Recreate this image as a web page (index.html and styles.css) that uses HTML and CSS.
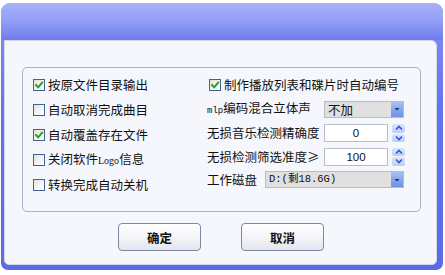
FILE: index.html
```html
<!DOCTYPE html>
<html>
<head>
<meta charset="utf-8">
<link rel="stylesheet" href="styles.css">
</head>
<body>
<div class="window">
  <div class="titlebar"></div>
  <div class="client">
    <div class="group">
      <div class="col col-left">
        <div class="row"><span class="cb checked"><svg viewBox="0 0 10 10"><path d="M2 5 L4.2 7.4 L8.2 2.6"/></svg></span><span class="txt">按原文件目录输出</span></div>
        <div class="row"><span class="cb"></span><span class="txt">自动取消完成曲目</span></div>
        <div class="row"><span class="cb checked"><svg viewBox="0 0 10 10"><path d="M2 5 L4.2 7.4 L8.2 2.6"/></svg></span><span class="txt">自动覆盖存在文件</span></div>
        <div class="row"><span class="cb"></span><span class="txt">关闭软件<span class="latin">Logo</span>信息</span></div>
        <div class="row"><span class="cb"></span><span class="txt">转换完成自动关机</span></div>
      </div>
      <div class="col col-right">
        <div class="row r1"><span class="cb checked"><svg viewBox="0 0 10 10"><path d="M2 5 L4.2 7.4 L8.2 2.6"/></svg></span><span class="txt">制作播放列表和碟片时自动编号</span></div>
        <div class="row r2">
          <span class="lbl"><span class="mono">mlp</span>编码混合立体声</span>
          <div class="select sel-small"><span class="val">不加</span><span class="dd"><svg viewBox="0 0 8 8"><path d="M1.5 3 L6.5 3 L4 5.5 Z"/></svg></span></div>
        </div>
        <div class="row r3">
          <span class="lbl">无损音乐检测精确度</span>
          <div class="spin"><span class="num">0</span></div>
          <div class="spinbtn"><span class="half"><svg viewBox="0 0 10 6"><path d="M2 4.5 L5 1.5 L8 4.5"/></svg></span><span class="half"><svg viewBox="0 0 10 6"><path d="M2 1.5 L5 4.5 L8 1.5"/></svg></span></div>
        </div>
        <div class="row r4">
          <span class="lbl">无损检测筛选准度≥</span>
          <div class="spin"><span class="num">100</span></div>
          <div class="spinbtn"><span class="half"><svg viewBox="0 0 10 6"><path d="M2 4.5 L5 1.5 L8 4.5"/></svg></span><span class="half"><svg viewBox="0 0 10 6"><path d="M2 1.5 L5 4.5 L8 1.5"/></svg></span></div>
        </div>
        <div class="row r5">
          <span class="lbl lbl-disk">工作磁盘</span>
          <div class="select sel-disk"><span class="val mono-val">D:(剩18.6G)</span><span class="dd"><svg viewBox="0 0 8 8"><path d="M1.5 3 L6.5 3 L4 5.5 Z"/></svg></span></div>
        </div>
      </div>
    </div>
    <div class="buttons">
      <button class="btn">确定</button>
      <button class="btn">取消</button>
    </div>
  </div>
</div>
</body>
</html>
```

FILE: styles.css
```css
* { box-sizing: border-box; }
html, body { margin: 0; padding: 0; background: #ffffff; }
body {
  width: 445px;
  height: 275px;
  overflow: hidden;
  font-family: "Noto Sans CJK SC", "Noto Sans", sans-serif;
  font-size: 12.5px;
  color: #111;
}
.window {
  margin: 3px 0 0 1px;
  width: 442px;
  height: 267px;
  border-radius: 9px 9px 7px 7px;
  background: linear-gradient(180deg, #9ea9f8 0%, #7d8af3 10%, #6474ec 40%, #5b6be6 100%);
  display: flex;
  flex-direction: column;
  padding: 0 6px 5px 3px;
}
.titlebar {
  height: 37px;
  margin: 0 -6px 0 -3px;
  border-radius: 9px 9px 0 0;
  background: linear-gradient(180deg, #a6b0fa 0%, #97a2f7 40%, #7c8af2 80%, #6d7cef 100%);
  flex: none;
}
.client {
  flex: 1;
  background: #f5f7fd;
  border: 1px solid #d3d8ea;
  border-radius: 0 6px 5px 5px;
  display: flex;
  flex-direction: column;
  padding: 26px 15px 0 17px;
}
.group {
  height: 145px;
  border: 1px solid #a9b0c6;
  border-radius: 5px;
  display: flex;
  padding: 4px 0 0 10px;
}
.col { display: flex; flex-direction: column; }
.col-left { width: 174px; }
.row {
  display: flex;
  align-items: center;
  height: 25px;
  white-space: nowrap;
}
.cb {
  width: 12px;
  height: 12px;
  border: 1px solid #3f6397;
  background: linear-gradient(135deg, #e2e2dc 0%, #f6f6f4 60%, #ffffff 100%);
  margin-right: 3px;
  display: flex;
  align-items: center;
  justify-content: center;
  flex: none;
}
.cb svg { width: 10px; height: 10px; }
.cb path { fill: none; stroke: #1f9e22; stroke-width: 1.9; stroke-linecap: square; }
.txt { line-height: 14px; }
.latin { font-family: "Liberation Serif", serif; font-size: 10px; }
.col-right { width: 210px; }
.r1 { height: 25px; padding-left: 2px; }
.r2 { height: 24px; }
.r3 { height: 24px; }
.r4 { height: 23px; }
.r5 { height: 23px; }
.lbl { width: 117px; line-height: 14px; }
.lbl-disk { width: 58px; }
.mono { font-family: "Liberation Mono", monospace; font-size: 9px; }
.select {
  display: flex;
  height: 17px;
  border: 1px solid #b7bcc8;
  background: #e0e0e0;
  align-items: stretch;
}
.sel-small { width: 80px; }
.sel-disk { width: 139px; }
.select .val {
  flex: 1;
  padding-left: 3px;
  line-height: 15px;
}
.mono-val { font-family: "Liberation Mono", "Noto Sans CJK SC", monospace; font-size: 10.5px; padding-left: 5px; }
.dd {
  width: 12px;
  margin: 0 0 0 1px;
  background: linear-gradient(180deg, #a9c2f6 0%, #86a6ee 50%, #6f92e6 100%);
  display: flex;
  align-items: center;
  justify-content: center;
}
.dd svg { width: 8px; height: 8px; }
.dd path { fill: #1c2f78; }
.spin {
  width: 64px;
  height: 18px;
  border: 1px solid #b6bdcc;
  background: #ffffff;
  display: flex;
  align-items: center;
  justify-content: center;
}
.num { font-family: "Liberation Sans", Arial, sans-serif; font-size: 11.5px; }
.spinbtn {
  margin-left: 4px;
  width: 13px;
  height: 18px;
  display: flex;
  flex-direction: column;
  gap: 1px;
}
.half {
  flex: 1;
  background: linear-gradient(180deg, #dce6fb 0%, #bccef5 100%);
  border-radius: 2px;
  display: flex;
  align-items: center;
  justify-content: center;
}
.half svg { width: 10px; height: 6px; }
.half path { fill: none; stroke: #2c5ad0; stroke-width: 1.6; }
.buttons {
  display: flex;
  justify-content: center;
  gap: 40px;
  margin-top: 11px;
  padding-right: 1px;
}
.btn {
  width: 83px;
  height: 28px;
  border: 1px solid #7b88a6;
  border-radius: 4px;
  background: linear-gradient(180deg, #ffffff 0%, #f4f5f9 50%, #e3e5ee 100%);
  font-family: "Noto Sans CJK SC", sans-serif;
  font-weight: bold;
  font-size: 12.5px;
  color: #111;
  padding: 0;
}
```
